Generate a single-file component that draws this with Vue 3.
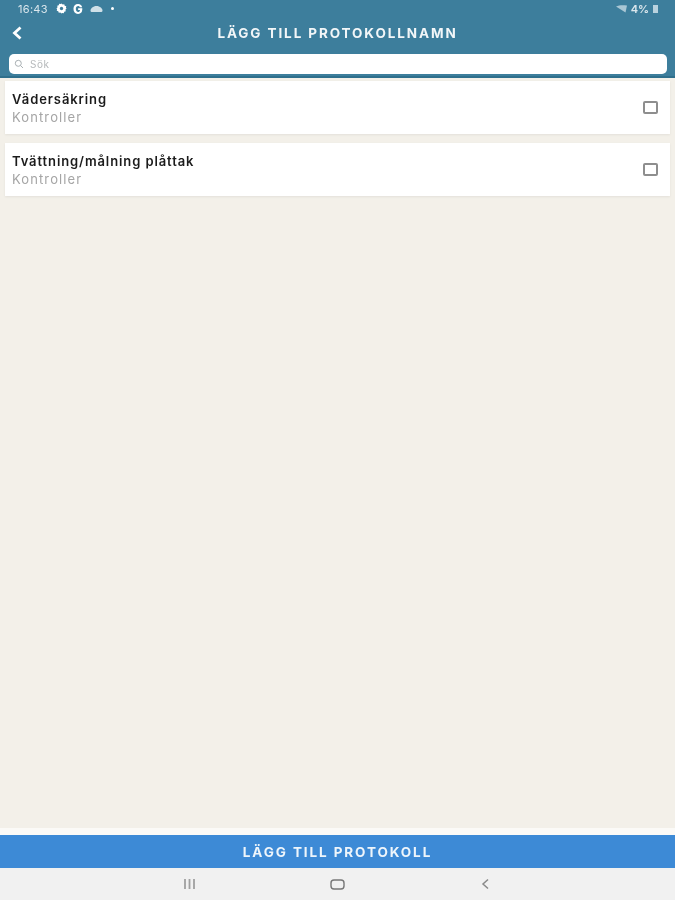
<script setup>
const rows = [
  { id: 1, name: "Vädersäkring", type: "Kontroller" },
  { id: 2, name: "Tvättning/målning plåttak", type: "Kontroller" },
];
</script>

<template>
  <main class="page">
    <header class="top">
      <div class="status">
        <div class="status-left">
          <span class="time">16:43</span>
          <svg width="11" height="11" viewBox="0 0 12 12">
            <path d="M6 .5l1.300 1.200 1.700-.4.500 1.700 1.700.5-.4 1.700L11.500 6l-1.200 1.300.4 1.700-1.700.5-.5 1.700-1.700-.4L6 11.500l-1.300-1.200-1.700.4-.5-1.700-1.700-.5.4-1.700L.5 6l1.200-1.300-.4-1.700 1.700-.5.5-1.700 1.700.4z" fill="#fff" />
            <circle cx="6" cy="6" r="1.800" fill="#3d7e9c" />
          </svg>
          <span class="g">G</span>
          <svg width="13" height="8" viewBox="0 0 13 8">
            <path d="M.5 5.500C.5 3.500 3 1 6.500 1s6 2.500 6 4.500c0 1-.8 1.500-1.500 1.500H2C1.200 7 .5 6.500.5 5.500z" fill="#cfe0e8" />
          </svg>
          <span class="dot"></span>
        </div>
        <div class="status-right">
          <svg width="11" height="8" viewBox="0 0 11 8">
            <path d="M0 1.500C3 0 7 0 11 .5L9.500 7.500z" fill="#a9c7d5" />
          </svg>
          <span class="pct">4%</span>
          <span class="battery"></span>
        </div>
      </div>
      <div class="title-row">
        <svg class="back" width="12" height="14" viewBox="0 0 12 14">
          <path d="M9.500 1.500L3.500 7l6 5.500" fill="none" stroke="#fff" stroke-width="2.800" />
        </svg>
        <h1>LÄGG TILL PROTOKOLLNAMN</h1>
      </div>
      <div class="search">
        <svg width="10" height="10" viewBox="0 0 10 10">
          <circle cx="4.300" cy="4.300" r="3" fill="none" stroke="#a9b0b3" />
          <path d="M6.500 6.500L9 9" stroke="#a9b0b3" />
        </svg>
        <span>Sök</span>
      </div>
    </header>

    <section class="list">
      <div v-for="row in rows" :key="row.id" class="row">
        <div>
          <div class="name">{{ row.name }}</div>
          <div class="type">{{ row.type }}</div>
        </div>
        <span class="check"></span>
      </div>
    </section>

    <div class="foot-gap"></div>
    <button class="add">LÄGG TILL PROTOKOLL</button>
    <nav class="nav">
      <svg width="13" height="10" viewBox="0 0 13 10">
        <path d="M2 0v10M6.500 0v10M11 0v10" stroke="#a0a0a0" stroke-width="1.800" />
      </svg>
      <svg width="15" height="11" viewBox="0 0 15 11">
        <rect x="1" y="1" width="13" height="9" rx="3" fill="none" stroke="#777" stroke-width="1.400" />
      </svg>
      <svg width="9" height="12" viewBox="0 0 9 12">
        <path d="M7 1.500L2 6l5 4.500" fill="none" stroke="#8a8a8a" stroke-width="1.500" />
      </svg>
    </nav>
  </main>
</template>

<style scoped>
.page {
  width: 675px;
  height: 900px;
  display: flex;
  flex-direction: column;
  background: #f3f0e9;
  font-family: "Inter", sans-serif;
  overflow: hidden;
  filter: blur(0.45px);
}

.top {
  height: 78px;
  box-sizing: border-box;
  background: #3d7e9c;
  border-bottom: 2px solid #2f6f8c;
  color: #fff;
}

.status {
  height: 17px;
  padding: 0 17px 0 18px;
  display: flex;
  justify-content: space-between;
  align-items: center;
  font-size: 11px;
  color: #dbe7ed;
}

.status-left {
  display: flex;
  align-items: center;
  gap: 6px;
}

.status-right {
  display: flex;
  align-items: center;
  gap: 4px;
}

.time {
  letter-spacing: 0.3px;
  width: 32px;
}

.pct {
  font-weight: 600;
}

.g {
  font-weight: 800;
  font-size: 13px;
  width: 11px;
  color: #fff;
}

.dot {
  width: 3px;
  height: 3px;
  margin-left: 2px;
  border-radius: 50%;
  background: #fff;
}

.battery {
  width: 5px;
  height: 8px;
  background: #b9d2de;
}

.title-row {
  height: 32px;
  position: relative;
  display: flex;
  align-items: center;
  justify-content: center;
}

.back {
  position: absolute;
  left: 11px;
  top: 9px;
}

h1 {
  margin: 0;
  font-size: 13.500px;
  font-weight: 700;
  letter-spacing: 1.900px;
  color: #f2f6f8;
}

.search {
  height: 20px;
  margin: 5px 8px 0 9px;
  padding-left: 5px;
  display: flex;
  align-items: center;
  gap: 6px;
  background: #fff;
  border-radius: 5px;
  font-size: 10px;
  letter-spacing: 0.5px;
  color: #b5b8ba;
}

.list {
  padding: 3px 5px 0;
  flex: 1;
}

.row {
  height: 53px;
  margin-bottom: 9px;
  box-sizing: border-box;
  padding: 0 12px 0 7px;
  display: flex;
  justify-content: space-between;
  align-items: center;
  background: #fff;
  box-shadow: 0 1px 2px #e4e1da;
}

.name {
  font-size: 13px;
  font-weight: 600;
  letter-spacing: 0.9px;
  color: #1b1b1b;
  line-height: 18px;
}

.type {
  font-size: 13px;
  letter-spacing: 1.100px;
  color: #a5a5a5;
  line-height: 18px;
}

.check {
  width: 15px;
  height: 13px;
  box-sizing: border-box;
  border: 2px solid #8e8e8e;
  border-radius: 2px;
}

.foot-gap {
  height: 7px;
  background: #fbfaf7;
}

.add {
  height: 33px;
  border: none;
  padding: 0;
  background: #3d8ad6;
  color: #eef5fb;
  font-family: "Inter", sans-serif;
  font-size: 13.500px;
  font-weight: 700;
  letter-spacing: 1.900px;
}

.nav {
  height: 32px;
  display: grid;
  grid-template-columns: repeat(3, 148px);
  justify-content: center;
  justify-items: center;
  align-items: center;
  background: #f1f1f1;
}
</style>
